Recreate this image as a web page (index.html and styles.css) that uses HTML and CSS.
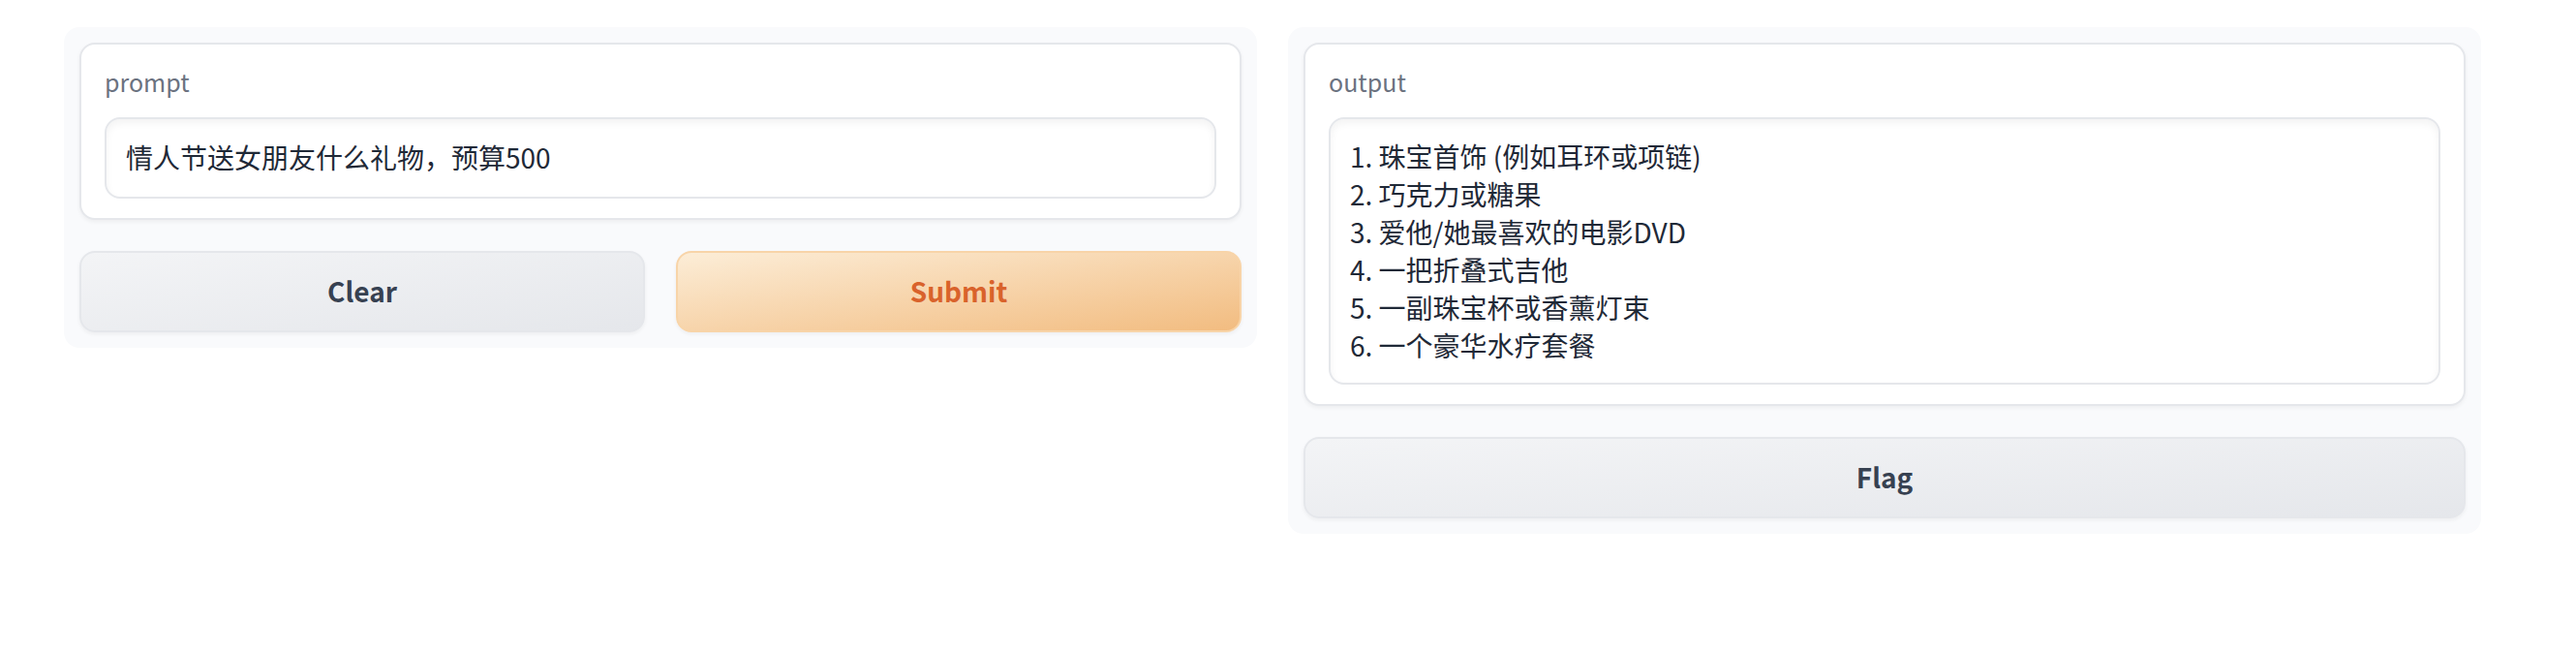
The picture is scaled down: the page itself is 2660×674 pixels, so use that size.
FILE: index.html
```html
<!DOCTYPE html>
<html lang="zh-CN">
<head>
<meta charset="utf-8">
<meta name="viewport" content="width=device-width, initial-scale=1">
<title>prompt</title>
<link rel="stylesheet" href="styles.css">
</head>
<body>
<main class="interface">
  <form class="panel">
    <div class="block">
      <label class="block-label" for="prompt">prompt</label>
      <input class="field" id="prompt" type="text" value="情人节送女朋友什么礼物，预算500">
    </div>
    <div class="actions">
      <button class="button" type="reset">Clear</button>
      <button class="button button-primary" type="button">Submit</button>
    </div>
  </form>
  <section class="panel">
    <div class="block">
      <label class="block-label" for="output">output</label>
      <textarea class="field field-output" id="output" rows="6" readonly>1. 珠宝首饰 (例如耳环或项链)
2. 巧克力或糖果
3. 爱他/她最喜欢的电影DVD
4. 一把折叠式吉他
5. 一副珠宝杯或香薰灯束
6. 一个豪华水疗套餐</textarea>
    </div>
    <div class="actions">
      <button class="button" type="button">Flag</button>
    </div>
  </section>
</main>
</body>
</html>
```
FILE: styles.css
```css
* {
  box-sizing: border-box;
}

body {
  margin: 0;
  background: #fff;
  color: #1f2937;
  font-family: "Noto Sans CJK SC", "Noto Sans", sans-serif;
}

.interface {
  display: flex;
  align-items: flex-start;
  gap: 32px;
  padding: 28px 98px 28px 66px;
}

.panel {
  display: flex;
  flex: 1 1 0;
  flex-direction: column;
  gap: 32px;
  min-width: 0;
  padding: 16px;
  border-radius: 16px;
  background: #f9fafc;
}

.block {
  display: flex;
  flex-direction: column;
  gap: 18px;
  padding: 20px 24px;
  border: 2px solid #e5e7eb;
  border-radius: 16px;
  background: #fff;
  box-shadow: 0 2px 4px rgba(0, 0, 0, 0.05);
}

.block-label {
  color: #6b7280;
  font-size: 25px;
  line-height: 37px;
}

.field {
  display: block;
  width: 100%;
  height: 84px;
  margin: 0;
  padding: 18px 20px 20px;
  border: 2px solid #e5e7eb;
  border-radius: 16px;
  outline: none;
  background: #fff;
  box-shadow: inset 0 4px 8px rgba(0, 0, 0, 0.05);
  color: #1f2937;
  font-family: inherit;
  font-size: 28px;
  line-height: 39px;
}

.field-output {
  height: auto;
  padding: 19px 20px;
  overflow: hidden;
  resize: none;
}

.actions {
  display: flex;
  gap: 32px;
}

.button {
  flex: 1 1 0;
  padding: 15px 32px 17px;
  border: 2px solid #e5e7eb;
  border-radius: 16px;
  background: linear-gradient(to bottom right, #f3f4f6, #e5e7eb);
  box-shadow: 0 2px 4px rgba(0, 0, 0, 0.05);
  color: #374151;
  font-family: inherit;
  font-size: 28px;
  font-weight: 700;
  line-height: 48px;
}

.button-primary {
  border-color: #f8d4a8;
  background: linear-gradient(to bottom right, #fcedd7, #f2bc80);
  color: #d9622b;
}
```
